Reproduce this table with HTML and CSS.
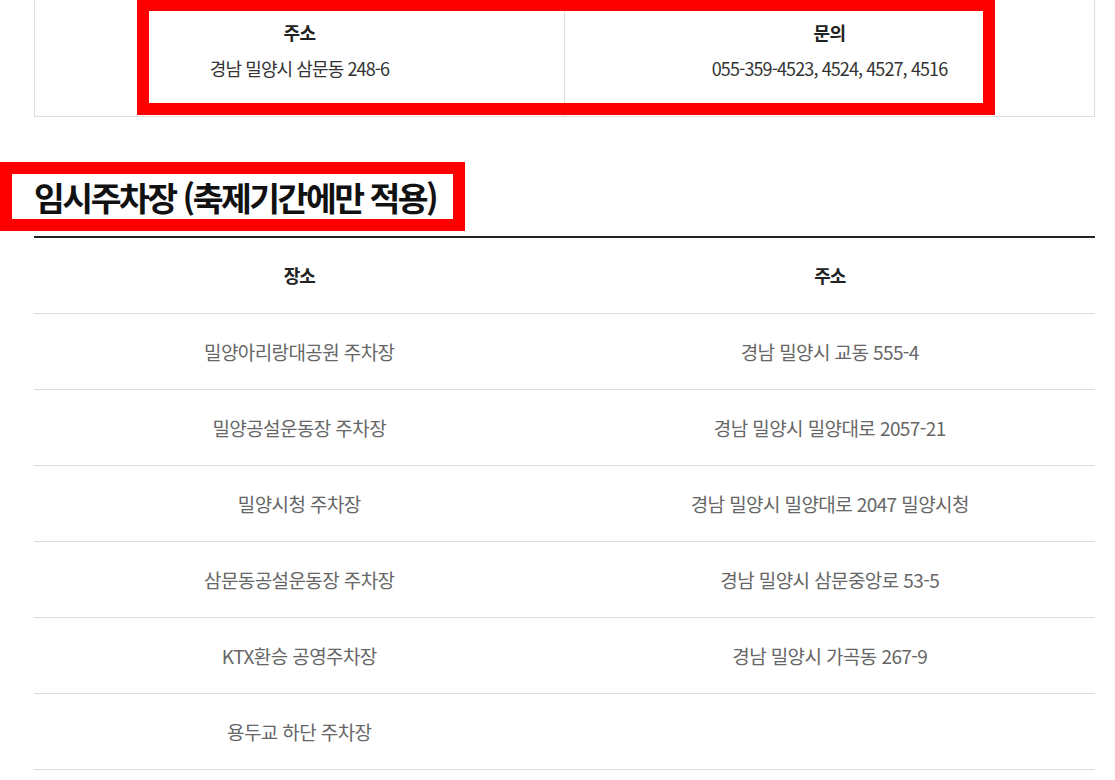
FILE: index.html
```html
<!DOCTYPE html>
<html lang="ko">
<head>
    <meta charset="UTF-8">
    <meta name="viewport" content="width=device-width, initial-scale=1.0">
    <title>주차장 안내</title>
    <link rel="stylesheet" href="styles.css">
</head>
<body>
    <div class="content">
        <div class="info-box">
            <table class="info-table">
                <tr>
                    <td>
                        <strong class="info-label">주소</strong>
                        <p class="info-value">경남 밀양시 삼문동 248-6</p>
                    </td>
                    <td>
                        <strong class="info-label">문의</strong>
                        <p class="info-value">055-359-4523, 4524, 4527, 4516</p>
                    </td>
                </tr>
            </table>
            <span class="highlight highlight-info"></span>
        </div>

        <div class="section">
            <h3 class="section-title">
                임시주차장 (축제기간에만 적용)
                <span class="highlight highlight-title"></span>
            </h3>

            <table class="parking-table">
                <thead>
                    <tr>
                        <th>장소</th>
                        <th>주소</th>
                    </tr>
                </thead>
                <tbody>
                    <tr>
                        <td>밀양아리랑대공원 주차장</td>
                        <td>경남 밀양시 교동 555-4</td>
                    </tr>
                    <tr>
                        <td>밀양공설운동장 주차장</td>
                        <td>경남 밀양시 밀양대로 2057-21</td>
                    </tr>
                    <tr>
                        <td>밀양시청 주차장</td>
                        <td>경남 밀양시 밀양대로 2047 밀양시청</td>
                    </tr>
                    <tr>
                        <td>삼문동공설운동장 주차장</td>
                        <td>경남 밀양시 삼문중앙로 53-5</td>
                    </tr>
                    <tr>
                        <td>KTX환승 공영주차장</td>
                        <td>경남 밀양시 가곡동 267-9</td>
                    </tr>
                    <tr>
                        <td>용두교 하단 주차장</td>
                        <td></td>
                    </tr>
                </tbody>
            </table>
        </div>
    </div>
</body>
</html>
```

FILE: styles.css
```css
body {
    margin: 0;
    padding: 0;
    background-color: #fff;
    font-family: "Noto Sans CJK KR", "Noto Sans", sans-serif;
    color: #333;
}

.content {
    width: 1061px;
    padding: 0 20px 0 34px;
}

/* 상단 안내 박스 */
.info-box {
    position: relative;
    margin-top: -10px;
    border: 1px solid #ddd;
    border-top: none;
}

.info-table {
    width: 100%;
    border-collapse: collapse;
    table-layout: fixed;
}

.info-table td {
    width: 50%;
    padding: 30px 0 36px;
    text-align: center;
    vertical-align: top;
}

.info-table td + td {
    border-left: 1px solid #ddd;
}

.info-label {
    display: block;
    font-size: 18px;
    line-height: 24px;
    font-weight: 700;
    color: #222;
    letter-spacing: -0.5px;
}

.info-value {
    margin: 12px 0 0;
    font-size: 18px;
    line-height: 24px;
    color: #333;
    letter-spacing: -0.9px;
}

/* 빨간 강조 표시 */
.highlight {
    position: absolute;
    box-sizing: border-box;
    border: 12px solid #ff0000;
    pointer-events: none;
}

.highlight-info {
    left: 102px;
    top: 9px;
    width: 858px;
    height: 116px;
}

.highlight-title {
    left: -34px;
    top: 0;
    width: 465px;
    height: 69px;
}

/* 임시주차장 */
.section {
    margin-top: 45px;
}

.section-title {
    position: relative;
    margin: 0 0 17px;
    padding-top: 13px;
    font-size: 33.5px;
    line-height: 44px;
    font-weight: 700;
    color: #111;
    letter-spacing: -2.5px;
}

.parking-table {
    width: 100%;
    border-collapse: separate;
    border-spacing: 0;
    table-layout: fixed;
    border-top: 2px solid #222;
}

.parking-table th,
.parking-table td {
    width: 50%;
    padding: 24px 0;
    line-height: 27px;
    text-align: center;
    border-bottom: 1px solid #ddd;
}

.parking-table th {
    font-size: 18px;
    font-weight: 700;
    color: #222;
    letter-spacing: -1px;
}

.parking-table td {
    font-size: 19px;
    color: #666;
    letter-spacing: -0.6px;
}
```
